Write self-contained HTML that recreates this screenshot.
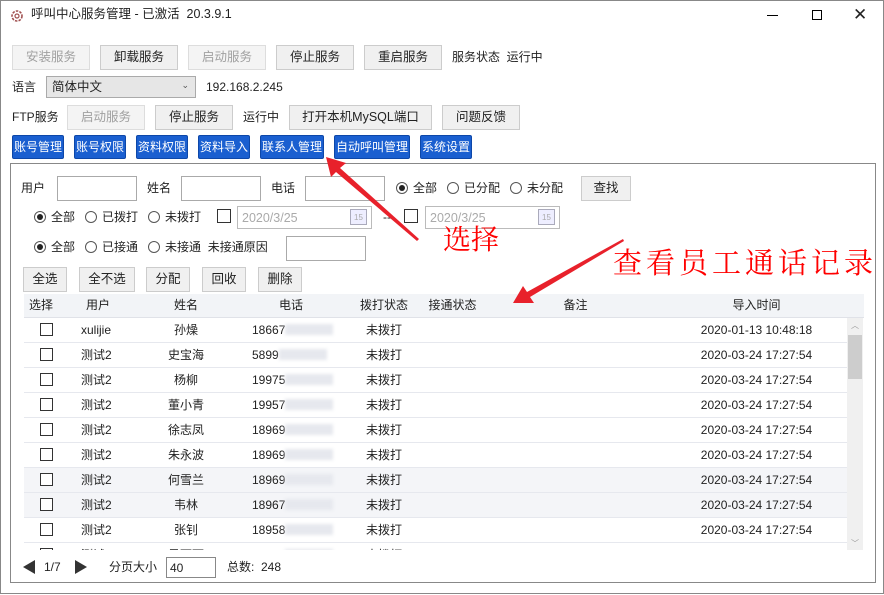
<!DOCTYPE html>
<html><head><meta charset="utf-8"><style>
*{box-sizing:border-box;margin:0;padding:0}
body{width:884px;height:594px;background:#fff;font-family:"Liberation Sans","Noto Sans CJK SC",sans-serif;font-size:12px;line-height:14px;color:#222;position:relative;overflow:hidden;border:1px solid #888}
.a{position:absolute;white-space:nowrap;line-height:14px}
.btn{position:absolute;height:25px;border:1px solid #ccc;background:#f0f0f0;text-align:center;line-height:23px;font-size:12.5px;white-space:nowrap}
.dis{color:#a0a0a0;background:#f4f4f4;border-color:#ddd}
.blue{position:absolute;top:134px;height:24px;background:#1a5fd0;color:#fff;border-radius:2px;line-height:22px;text-align:center;font-size:12px;border:1px solid #0d47a8;white-space:nowrap;overflow:visible}
.inp{position:absolute;height:25px;border:1px solid #aaa;background:#fff}
.rad{display:inline-block;width:12px;height:12px;border:1px solid #555;border-radius:50%;vertical-align:-2px;margin-right:5px;position:relative;background:#fff}
.rad.on::after{content:"";position:absolute;left:2px;top:2px;width:6px;height:6px;border-radius:50%;background:#222}
.cb{display:inline-block;width:13px;height:13px;border:1px solid #333;background:#fff}
.row{position:absolute;left:23px;width:823px;height:25px;border-bottom:1px solid #e6e8ee;background:#fff}
.row span{position:absolute;top:5px;text-align:center;line-height:14px;white-space:nowrap}
.hd span{position:absolute;top:4px;text-align:center;line-height:14px}
</style></head><body>
<svg class="a" style="left:9px;top:8px" width="14" height="14" viewBox="0 0 14 14"><circle cx="7" cy="7" r="5" fill="none" stroke="#a05050" stroke-width="1.6" stroke-dasharray="2.5 1.2"/><circle cx="7" cy="7" r="2" fill="none" stroke="#a05050" stroke-width="1.2"/></svg>
<div class="a" style="left:30px;top:6px;font-size:12.5px">呼叫中心服务管理 - 已激活&nbsp; 20.3.9.1</div>
<div class="a" style="left:766px;top:14px;width:11px;height:1px;background:#000"></div>
<div class="a" style="left:811px;top:9px;width:10px;height:10px;border:1px solid #000"></div>
<div class="a" style="left:852px;top:5px;font-size:17px;line-height:18px">✕</div>

<div class="btn dis" style="left:11px;top:44px;width:78px">安装服务</div>
<div class="btn" style="left:99px;top:44px;width:78px">卸载服务</div>
<div class="btn dis" style="left:187px;top:44px;width:78px">启动服务</div>
<div class="btn" style="left:275px;top:44px;width:78px">停止服务</div>
<div class="btn" style="left:363px;top:44px;width:78px">重启服务</div>
<div class="a" style="left:451px;top:49px">服务状态&nbsp;&nbsp;运行中</div>

<div class="a" style="left:11px;top:79px">语言</div>
<div class="a" style="left:45px;top:75px;width:150px;height:22px;border:1px solid #aaa;background:#e6e6e6;padding:3px 5px;font-size:12.5px">简体中文<span style="position:absolute;right:6px;top:1px;font-size:9px;color:#555">⌄</span></div>
<div class="a" style="left:205px;top:79px">192.168.2.245</div>

<div class="a" style="left:11px;top:109px">FTP服务</div>
<div class="btn dis" style="left:66px;top:104px;width:78px">启动服务</div>
<div class="btn" style="left:154px;top:104px;width:78px">停止服务</div>
<div class="a" style="left:242px;top:109px">运行中</div>
<div class="btn" style="left:288px;top:104px;width:143px">打开本机MySQL端口</div>
<div class="btn" style="left:441px;top:104px;width:78px">问题反馈</div>

<div class="blue" style="left:11px;width:52px">账号管理</div>
<div class="blue" style="left:73px;width:52px">账号权限</div>
<div class="blue" style="left:135px;width:52px">资料权限</div>
<div class="blue" style="left:197px;width:52px">资料导入</div>
<div class="blue" style="left:259px;width:64px">联系人管理</div>
<div class="blue" style="left:333px;width:76px">自动呼叫管理</div>
<div class="blue" style="left:419px;width:52px">系统设置</div>

<div class="a" style="left:9px;top:162px;width:866px;height:420px;border:1px solid #888"></div>
<div class="a" style="left:20px;top:180px">用户</div><div class="inp" style="left:56px;top:175px;width:80px"></div>
<div class="a" style="left:146px;top:180px">姓名</div><div class="inp" style="left:180px;top:175px;width:80px"></div>
<div class="a" style="left:270px;top:180px">电话</div><div class="inp" style="left:304px;top:175px;width:80px"></div>
<div class="a" style="left:395px;top:180px"><span class="rad on"></span>全部&nbsp;&nbsp;&nbsp;<span class="rad"></span>已分配&nbsp;&nbsp;&nbsp;<span class="rad"></span>未分配</div>
<div class="btn" style="left:580px;top:175px;width:50px">查找</div>

<div class="a" style="left:33px;top:209px"><span class="rad on"></span>全部&nbsp;&nbsp;&nbsp;<span class="rad"></span>已拨打&nbsp;&nbsp;&nbsp;<span class="rad"></span>未拨打</div>
<div class="a" style="left:216px;top:208px;width:14px;height:14px;border:1px solid #333"></div>
<div class="a" style="left:236px;top:205px;width:135px;height:23px;border:1px solid #bbb;color:#aaa;padding:4px 4px;font-size:12.5px">2020/3/25<span style="position:absolute;right:4px;top:2px;width:17px;height:16px;border:1px solid #aab;background:#eef;font-size:8px;text-align:center;line-height:16px">15</span></div>
<div class="a" style="left:382px;top:209px">--</div>
<div class="a" style="left:403px;top:208px;width:14px;height:14px;border:1px solid #333"></div>
<div class="a" style="left:424px;top:205px;width:135px;height:23px;border:1px solid #bbb;color:#aaa;padding:4px 4px;font-size:12.5px">2020/3/25<span style="position:absolute;right:4px;top:2px;width:17px;height:16px;border:1px solid #aab;background:#eef;font-size:8px;text-align:center;line-height:16px">15</span></div>

<div class="a" style="left:33px;top:239px"><span class="rad on"></span>全部&nbsp;&nbsp;&nbsp;<span class="rad"></span>已接通&nbsp;&nbsp;&nbsp;<span class="rad"></span>未接通&nbsp;&nbsp;未接通原因</div>
<div class="inp" style="left:285px;top:235px;width:80px"></div>

<div class="btn" style="left:22px;top:266px;width:44px">全选</div>
<div class="btn" style="left:78px;top:266px;width:56px">全不选</div>
<div class="btn" style="left:145px;top:266px;width:44px">分配</div>
<div class="btn" style="left:201px;top:266px;width:44px">回收</div>
<div class="btn" style="left:257px;top:266px;width:44px">删除</div>

<div class="a hd" style="left:23px;top:293px;width:840px;height:24px;background:#f2f4f7;border-bottom:1px solid #e0e2e8">
<span style="left:0;width:34px">选择</span><span style="left:34px;width:80px">用户</span><span style="left:114px;width:96px">姓名</span><span style="left:210px;width:114px">电话</span><span style="left:324px;width:72px">拨打状态</span><span style="left:396px;width:65px">接通状态</span><span style="left:461px;width:181px">备注</span><span style="left:642px;width:181px">导入时间</span>
</div>
<div class="a" style="left:23px;top:317px;width:823px;height:232px;overflow:hidden">
<div style="position:relative">
<script>
var d=[["xulijie","孙燥","18667","2020-01-13 10:48:18"],["测试2","史宝海","5899","2020-03-24 17:27:54"],["测试2","杨柳","19975","2020-03-24 17:27:54"],["测试2","董小青","19957","2020-03-24 17:27:54"],["测试2","徐志凤","18969","2020-03-24 17:27:54"],["测试2","朱永波","18969","2020-03-24 17:27:54"],["测试2","何雪兰","18969","2020-03-24 17:27:54"],["测试2","韦林","18967","2020-03-24 17:27:54"],["测试2","张钊","18958","2020-03-24 17:27:54"],["测试2","吴丽丽","18958","2020-03-24 17:27:54"]];
for(var i=0;i<d.length;i++){var r=d[i];document.write('<div class="row" style="left:0;top:'+(i*25)+'px;'+((i==6||i==7)?'background:#f4f5f8':'')+'"><span style="left:16px;top:5px" class="cb"></span><span style="left:57px;text-align:left">'+r[0]+'</span><span style="left:114px;width:96px">'+r[1]+'</span><span style="left:228px;text-align:left">'+r[2]+'<i style="display:inline-block;width:48px;height:11px;background:#e6e8ee;vertical-align:-1px;filter:blur(1.5px)"></i></span><span style="left:324px;width:72px">未拨打</span><span style="left:642px;width:181px">'+r[3]+'</span></div>');}
</script>
</div></div>
<div class="a" style="left:846px;top:317px;width:16px;height:232px;background:#f0f0f0"></div>
<div class="a" style="left:850px;top:318px;font-size:8px;color:#999">︿</div>
<div class="a" style="left:847px;top:334px;width:14px;height:44px;background:#cdcdcd"></div>
<div class="a" style="left:850px;top:536px;font-size:8px;color:#999">﹀</div>

<div class="a" style="left:22px;top:559px;width:0;height:0;border-top:7px solid transparent;border-bottom:7px solid transparent;border-right:12px solid #333"></div>
<div class="a" style="left:43px;top:559px">1/7</div>
<div class="a" style="left:74px;top:559px;width:0;height:0;border-top:7px solid transparent;border-bottom:7px solid transparent;border-left:12px solid #333"></div>
<div class="a" style="left:108px;top:559px">分页大小</div>
<div class="a" style="left:165px;top:556px;width:50px;height:21px;border:1px solid #888;padding:3px 3px">40</div>
<div class="a" style="left:226px;top:559px">总数:&nbsp;&nbsp;248</div>

<svg class="a" style="left:0;top:0" width="884" height="594">
<polygon points="325,156 345,162 339,167 418,238 416,240 335,171 330,176" fill="#e8212b"/>
<polygon points="512,302 522,285 526,291 622,238 623,240 529,296 533,302" fill="#e8212b"/>
</svg>
<div class="a" style="left:442px;top:221px;font-size:28px;line-height:32px;color:#f00;font-family:'Noto Serif CJK SC',serif">选择</div>
<div class="a" style="left:612px;top:245px;font-size:29px;line-height:32px;color:#f00;letter-spacing:4px;font-family:'Noto Serif CJK SC',serif">查看员工通话记录</div>
</body></html>
